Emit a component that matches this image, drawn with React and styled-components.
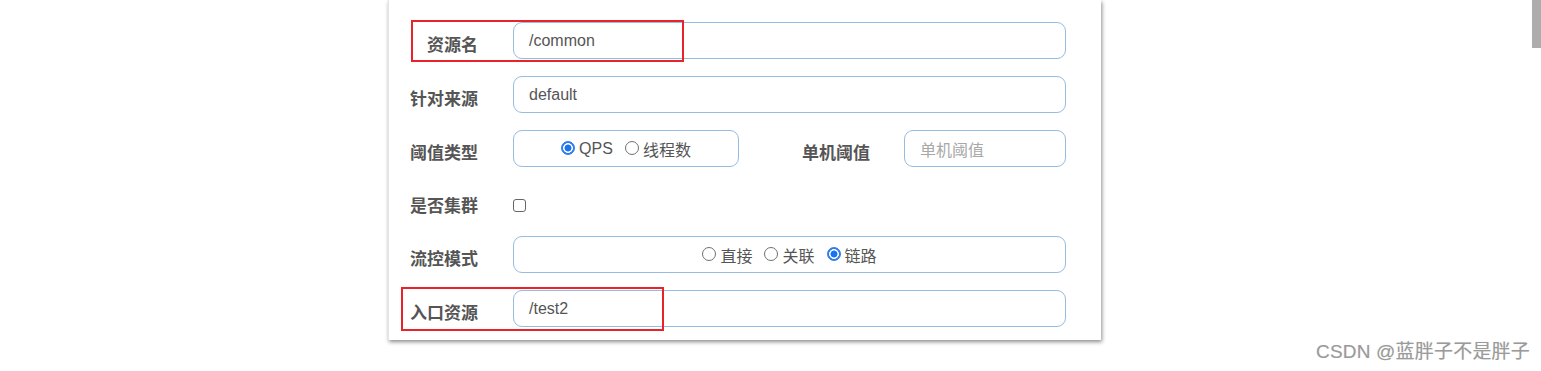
import React from 'react'
import styled, { createGlobalStyle } from 'styled-components';

const GlobalStyle = createGlobalStyle`
  html, body {
    margin: 0;
    padding: 0;
    background: #fff;
    overflow: hidden;
  }
`;

const Page = styled.div`
  width: 1541px;
  height: 371px;
  display: flex;
  padding-left: 388px;
  box-sizing: border-box;
  font-family: "Liberation Sans", "Noto Sans CJK SC", sans-serif;
`;

const Panel = styled.div`
  width: 713px;
  height: 340px;
  box-sizing: border-box;
  padding: 22px 35px 0 0;
  background: #fff;
  border-left: 1px solid #e4e4e4;
  box-shadow: 1px 2px 4px rgba(0, 0, 0, 0.45);
  display: flex;
  flex-direction: column;
  gap: 17px;
`;

const Row = styled.div`
  position: relative;
  display: grid;
  grid-template-columns: 89px 1fr;
  column-gap: 35px;
  align-items: center;
  height: ${props => props.short ? '35px' : '37px'};
`;

const Label = styled.div`
  text-align: right;
  font-family: "Noto Sans CJK SC", sans-serif;
  font-weight: bold;
  font-size: 17px;
  color: #555;
  padding-top: 5px;
  white-space: nowrap;
`;

const Field = styled.div`
  height: 37px;
  box-sizing: border-box;
  border: 1.5px solid #96bce1;
  border-radius: 9px;
  display: flex;
  align-items: center;
  justify-content: ${props => props.center ? 'center' : 'flex-start'};
  padding: 0 15px;
  font-size: 16px;
  color: ${props => props.placeholder ? '#a8a8a8' : '#555'};
  width: ${props => props.w || 'auto'};
  gap: 12px;
`;

const Split = styled.div`
  display: flex;
  align-items: center;
`;

const InlineLabel = styled(Label)`
  flex: 1;
  padding-right: 34px;
`;

const Radio = styled.span`
  display: inline-flex;
  align-items: center;
  gap: 4px;
  font-family: "Liberation Sans", "Noto Sans CJK SC", sans-serif;
  font-size: 16px;
  color: #555;

  &::before {
    content: "";
    width: 14px;
    height: 14px;
    box-sizing: border-box;
    border-radius: 50%;
    border: ${props => props.checked ? '1.5px solid #2b7cf0' : '1px solid #707070'};
    background: ${props => props.checked
      ? 'radial-gradient(circle, #1a73f0 0 3.2px, #fff 3.8px 4.6px, #2b7cf0 5.2px)'
      : '#fff'};
    margin-top: -2px;
  }
`;

const Checkbox = styled.span`
  display: block;
  width: 13px;
  height: 13px;
  box-sizing: border-box;
  border: 1px solid #666;
  border-radius: 3px;
  margin-top: 8px;
`;

const Highlight = styled.div`
  position: absolute;
  left: ${props => props.left}px;
  top: ${props => props.top}px;
  width: ${props => props.width}px;
  height: ${props => props.height}px;
  border: 2px solid #e8232a;
  box-sizing: border-box;
  pointer-events: none;
`;

const Watermark = styled.div`
  margin-left: auto;
  margin-right: 11px;
  align-self: flex-end;
  margin-bottom: 8px;
  font-family: "Liberation Sans", "Noto Sans CJK SC", sans-serif;
  font-size: 19px;
  letter-spacing: 0.2px;
  color: #9a9a9a;
  text-shadow: 0 0 1px rgba(0, 0, 0, 0.15);
  white-space: nowrap;
`;

const ScrollThumb = styled.div`
  position: fixed;
  top: 0;
  right: 0;
  width: 9px;
  height: 48px;
  background: #adadad;
`;

export default function App() {
    return (
        <>
            <GlobalStyle />
            <Page>
                <Panel>
                    <Row>
                        <Label>资源名</Label>
                        <Field>/common</Field>
                        <Highlight left={22} top={-2} width={273} height={42} />
                    </Row>
                    <Row>
                        <Label>针对来源</Label>
                        <Field>default</Field>
                    </Row>
                    <Row>
                        <Label>阈值类型</Label>
                        <Split>
                            <Field center w="226px">
                                <Radio checked>QPS</Radio>
                                <Radio>线程数</Radio>
                            </Field>
                            <InlineLabel>单机阈值</InlineLabel>
                            <Field placeholder w="162px">单机阈值</Field>
                        </Split>
                    </Row>
                    <Row short>
                        <Label>是否集群</Label>
                        <Checkbox />
                    </Row>
                    <Row>
                        <Label>流控模式</Label>
                        <Field center>
                            <Radio>直接</Radio>
                            <Radio>关联</Radio>
                            <Radio checked>链路</Radio>
                        </Field>
                    </Row>
                    <Row>
                        <Label>入口资源</Label>
                        <Field>/test2</Field>
                        <Highlight left={12} top={-3} width={263} height={44} />
                    </Row>
                </Panel>
                <Watermark>CSDN @蓝胖子不是胖子</Watermark>
            </Page>
            <ScrollThumb />
        </>
    )
}
